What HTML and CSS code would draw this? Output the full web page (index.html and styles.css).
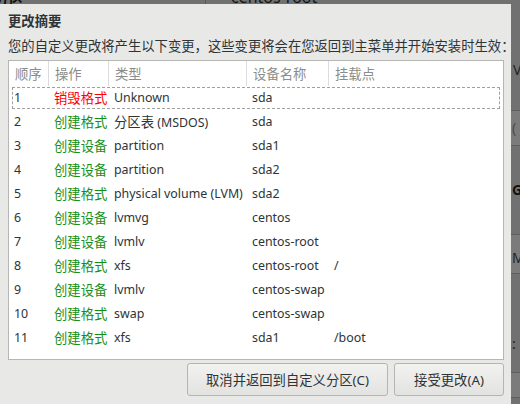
FILE: index.html
```html
<!DOCTYPE html>
<html lang="zh">
<head>
<meta charset="utf-8">
<link rel="stylesheet" href="styles.css">
</head>
<body>
<div class="backdrop">
  <span class="bg-frag bg-title">分区</span>
  <span class="bg-line bg-line-a"></span>
  <span class="bg-frag bg-root">centos-root</span>
  <span class="bg-band bg-band-1"></span>
  <span class="bg-band bg-band-2"></span>
  <span class="bg-band bg-band-3"></span>
  <span class="bg-frag bg-v">V</span>
  <span class="bg-frag bg-p">(</span>
  <span class="bg-frag bg-g">G</span>
  <span class="bg-frag bg-m">M</span>
  <span class="bg-frag bg-c">:</span>
</div>
<div class="dialog">
  <h1 class="title">更改摘要</h1>
  <p class="subtitle">您的自定义更改将产生以下变更，这些变更将会在您返回到主菜单并开始安装时生效：</p>
  <div class="table">
    <div class="row head">
      <div class="cell">顺序</div>
      <div class="cell">操作</div>
      <div class="cell">类型</div>
      <div class="cell">设备名称</div>
      <div class="cell last">挂载点</div>
    </div>
    <div class="row focus"><div class="cell lat">1</div><div class="cell red">销毁格式</div><div class="cell lat">Unknown</div><div class="cell lat">sda</div><div class="cell lat"></div></div>
    <div class="row"><div class="cell lat">2</div><div class="cell green">创建格式</div><div class="cell lat"><span class="cjk">分区表</span> (MSDOS)</div><div class="cell lat">sda</div><div class="cell lat"></div></div>
    <div class="row"><div class="cell lat">3</div><div class="cell green">创建设备</div><div class="cell lat">partition</div><div class="cell lat">sda1</div><div class="cell lat"></div></div>
    <div class="row"><div class="cell lat">4</div><div class="cell green">创建设备</div><div class="cell lat">partition</div><div class="cell lat">sda2</div><div class="cell lat"></div></div>
    <div class="row"><div class="cell lat">5</div><div class="cell green">创建格式</div><div class="cell lat">physical volume (LVM)</div><div class="cell lat">sda2</div><div class="cell lat"></div></div>
    <div class="row"><div class="cell lat">6</div><div class="cell green">创建设备</div><div class="cell lat">lvmvg</div><div class="cell lat">centos</div><div class="cell lat"></div></div>
    <div class="row"><div class="cell lat">7</div><div class="cell green">创建设备</div><div class="cell lat">lvmlv</div><div class="cell lat">centos-root</div><div class="cell lat"></div></div>
    <div class="row"><div class="cell lat">8</div><div class="cell green">创建格式</div><div class="cell lat">xfs</div><div class="cell lat">centos-root</div><div class="cell lat">/</div></div>
    <div class="row"><div class="cell lat">9</div><div class="cell green">创建设备</div><div class="cell lat">lvmlv</div><div class="cell lat">centos-swap</div><div class="cell lat"></div></div>
    <div class="row"><div class="cell lat">10</div><div class="cell green">创建格式</div><div class="cell lat">swap</div><div class="cell lat">centos-swap</div><div class="cell lat"></div></div>
    <div class="row"><div class="cell lat">11</div><div class="cell green">创建格式</div><div class="cell lat">xfs</div><div class="cell lat">sda1</div><div class="cell lat">/boot</div></div>
  </div>
  <div class="actions">
    <button class="btn btn-cancel">取消并返回到自定义分区(C)</button>
    <button class="btn btn-accept">接受更改(A)</button>
  </div>
</div>
</body>
</html>
```
FILE: styles.css
```css
* { box-sizing: border-box; }
html, body { margin: 0; padding: 0; }
body {
  width: 520px;
  height: 404px;
  overflow: hidden;
  background: #6f6f6f;
  font-family: "Noto Sans", "Noto Sans CJK SC", sans-serif;
  font-size: 13.33px;
  color: #2e3436;
  position: relative;
}
.backdrop { position: absolute; inset: 0; background: #717171; }
.bg-frag { position: absolute; color: #111; font-size: 15px; line-height: 16px; }
.bg-title { left: -6px; top: -10px; font-weight: bold; }
.bg-root { left: 231px; top: -11px; font-size: 16px; }
.bg-line { position: absolute; background: #5a5a5a; width: 1px; }
.bg-line-a { left: 205px; top: 0; height: 4px; }
.bg-band { position: absolute; left: 511px; width: 9px; background: #7b7b7b; border-top: 1px solid #5f5f5f; border-bottom: 1px solid #5f5f5f; }
.bg-band-1 { top: 110px; height: 36px; }
.bg-band-2 { top: 234px; height: 40px; }
.bg-band-3 { top: 372px; height: 26px; }
.bg-v { left: 513px; top: 62px; color: #222; font-size: 14px; }
.bg-p { left: 512px; top: 120px; color: #4a4a4a; font-size: 14px; }
.bg-g { left: 512px; top: 182px; color: #111; font-weight: bold; font-size: 14px; }
.bg-m { left: 512px; top: 250px; color: #222; font-size: 14px; }
.bg-c { left: 512px; top: 336px; color: #222; font-size: 14px; }

.dialog {
  position: absolute;
  left: 0;
  top: 4px;
  width: 511px;
  height: 400px;
  background: #e8e8e7;
  padding: 0 7px 0 8px;
  display: flex;
  flex-direction: column;
}
.title {
  margin: 9px 0 0;
  font-size: 13.33px;
  font-weight: bold;
  line-height: 16px;
  color: #2e3436;
}
.subtitle {
  margin: 9px 0 0;
  line-height: 16px;
  color: #2e3436;
  white-space: nowrap;
}
.table {
  margin-top: 6px;
  height: 300px;
  background: #fff;
  border: 1px solid #b6b6b3;
  display: flex;
  flex-direction: column;
}
.row {
  display: grid;
  grid-template-columns: 40px 60px 138px 82px 1fr;
  height: 24px;
  align-items: center;
  margin: 0 2px;
}
.row.head {
  height: 25px;
  margin: 0;
  grid-template-columns: 40px 60px 138px 82px 1fr;
  color: #8b8d8a;
  align-items: stretch;
}
.row.head .cell {
  border-right: 1px solid #dcdcdc;
  padding-left: 6px;
  display: flex;
  align-items: center;
}
.row.head .cell.last { border-right: none; }
.cell { padding-left: 3px; white-space: nowrap; line-height: 16px; }
.cell.lat { font-size: 12.4px; }
.cjk { font-size: 13.33px; }
.row.focus { outline: 1px dashed #a0a0a0; outline-offset: -2px; }
.red { color: #f00; }
.green { color: #168f16; }

.actions {
  display: flex;
  justify-content: flex-end;
  gap: 6px;
  margin-top: 3px;
}
.btn {
  height: 33px;
  border: 1px solid #b5b5b3;
  border-radius: 3px;
  background: linear-gradient(#f2f2f1, #e2e2e0);
  font-family: inherit;
  font-size: 13.33px;
  color: #2e3436;
  padding: 0;
}
.btn-cancel { width: 201px; }
.btn-accept { width: 110px; }
```
